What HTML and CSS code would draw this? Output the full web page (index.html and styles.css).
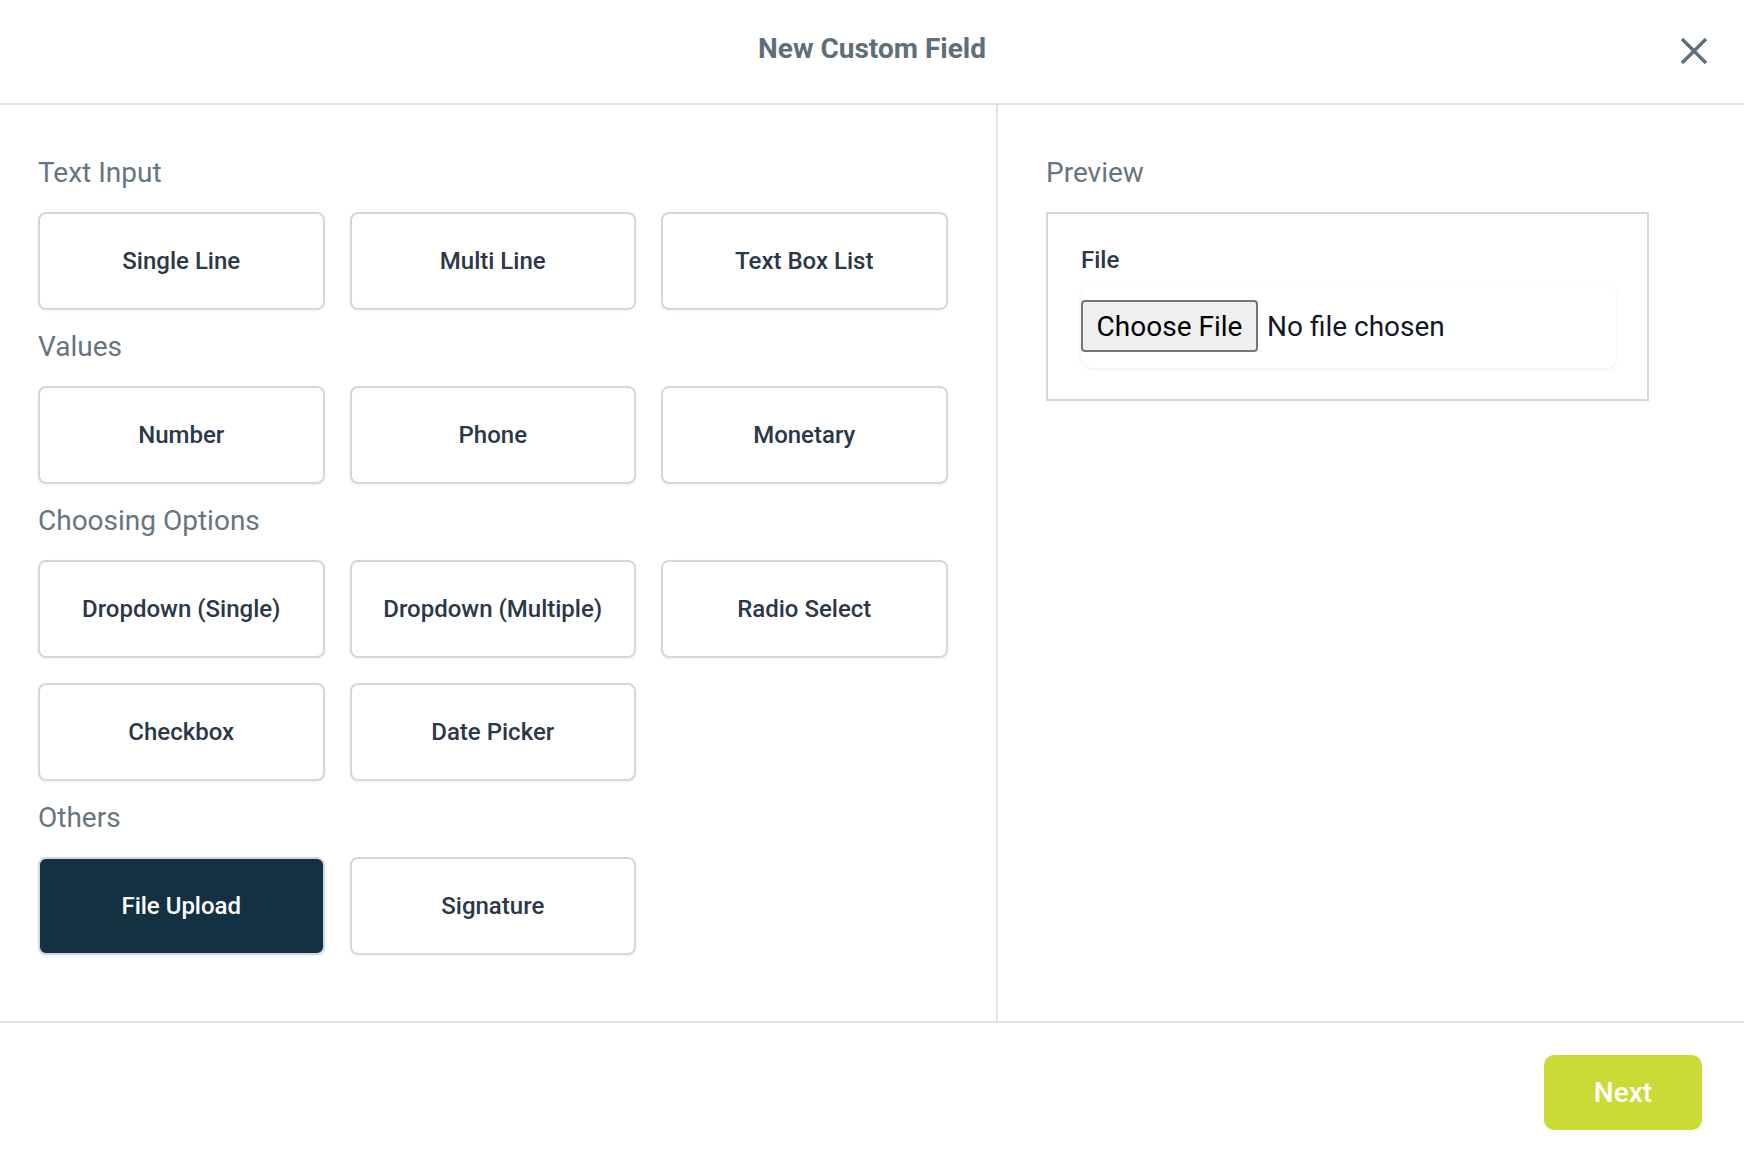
FILE: index.html
```html
<!DOCTYPE html>
<html lang="en">
<head>
<meta charset="utf-8">
<title>New Custom Field</title>
<link rel="stylesheet" href="styles.css">
</head>
<body>
<div class="modal">
  <header class="modal-header">
    <div class="spacer"></div>
    <h1 class="modal-title">New Custom Field</h1>
    <button class="close-btn" aria-label="Close">
      <svg width="28" height="28" viewBox="0 0 28 28"><path d="M2 2 L26 26 M26 2 L2 26" stroke="#5f6f79" stroke-width="3.4" fill="none"/></svg>
    </button>
  </header>
  <main class="modal-body">
    <section class="types">
      <div class="group">
        <h2 class="group-title">Text Input</h2>
        <div class="grid">
          <button class="type-btn">Single Line</button>
          <button class="type-btn">Multi Line</button>
          <button class="type-btn">Text Box List</button>
        </div>
      </div>
      <div class="group">
        <h2 class="group-title">Values</h2>
        <div class="grid">
          <button class="type-btn">Number</button>
          <button class="type-btn">Phone</button>
          <button class="type-btn">Monetary</button>
        </div>
      </div>
      <div class="group">
        <h2 class="group-title">Choosing Options</h2>
        <div class="grid">
          <button class="type-btn">Dropdown (Single)</button>
          <button class="type-btn">Dropdown (Multiple)</button>
          <button class="type-btn">Radio Select</button>
          <button class="type-btn">Checkbox</button>
          <button class="type-btn">Date Picker</button>
        </div>
      </div>
      <div class="group">
        <h2 class="group-title">Others</h2>
        <div class="grid">
          <button class="type-btn selected">File Upload</button>
          <button class="type-btn">Signature</button>
        </div>
      </div>
    </section>
    <section class="preview">
      <h2 class="group-title">Preview</h2>
      <div class="preview-box">
        <div class="field-label">File</div>
        <div class="file-picker">
          <span class="file-btn">Choose File</span>
          <span class="file-status">No file chosen</span>
        </div>
      </div>
    </section>
  </main>
  <footer class="modal-footer">
    <button class="next-btn">Next</button>
  </footer>
</div>
</body>
</html>
```

FILE: styles.css
```css
* { box-sizing: border-box; }

html, body {
  margin: 0;
  padding: 0;
  background: #ffffff;
}

body {
  font-family: Roboto, "Liberation Sans", Arial, sans-serif;
  width: 1744px;
  height: 1154px;
  overflow: hidden;
}

.modal {
  width: 1744px;
  height: 1154px;
  display: flex;
  flex-direction: column;
}

.modal-header {
  height: 105px;
  flex: none;
  border-bottom: 2px solid #dfe2e7;
  display: grid;
  grid-template-columns: 1fr auto 1fr;
  align-items: center;
}

.modal-title {
  margin: 0 0 6px 0;
  font-size: 28px;
  font-weight: 700;
  color: #5f6f79;
  line-height: 34px;
}

.close-btn {
  justify-self: end;
  margin-right: 36px;
  margin-bottom: 2px;
  width: 28px;
  height: 28px;
  padding: 0;
  border: 0;
  background: transparent;
  display: flex;
}

.modal-body {
  height: 918px;
  flex: none;
  display: flex;
  border-bottom: 2px solid #dfe2e7;
}

.types {
  width: 998px;
  border-right: 2px solid #dfe2e7;
  padding: 51px 0 0 38px;
  display: flex;
  flex-direction: column;
  gap: 20px;
}

.group-title {
  margin: 0 0 22px 0;
  font-size: 28px;
  font-weight: 400;
  line-height: 34px;
  color: #66757f;
}

.grid {
  display: grid;
  grid-template-columns: repeat(3, 286.5px);
  gap: 25px;
}

.type-btn {
  height: 98px;
  border: 2px solid #d3d7e1;
  border-radius: 8px;
  background: #ffffff;
  box-shadow: 0 1px 3px rgba(30, 40, 60, 0.06);
  font-family: Roboto, "Liberation Sans", Arial, sans-serif;
  font-size: 24px;
  font-weight: 500;
  color: #2b384a;
  padding: 0;
}

.type-btn.selected {
  background: #143043;
  color: #ffffff;
  border-color: #d3d7e1;
}

.preview {
  flex: 1;
  padding: 51px 0 0 48px;
}

.preview-box {
  width: 603px;
  border: 2px solid #d4d7e0;
  padding: 31px 31px 31px 33px;
}

.field-label {
  font-size: 24px;
  font-weight: 500;
  line-height: 30px;
  color: #2b384a;
  margin-bottom: 9px;
}

.file-picker {
  display: flex;
  align-items: center;
  gap: 9px;
  padding: 16px 0;
  background: #ffffff;
  border-radius: 12px;
  box-shadow: 0 1px 5px rgba(20, 30, 50, 0.07);
}

.file-btn {
  height: 52px;
  width: 177px;
  display: flex;
  align-items: center;
  justify-content: center;
  background: #efefef;
  border: 2px solid #767676;
  border-radius: 4px;
  font-size: 28px;
  color: #000000;
}

.file-status {
  font-size: 28px;
  color: #111827;
}

.modal-footer {
  flex: 1;
  display: flex;
  justify-content: flex-end;
  align-items: flex-start;
  padding: 32px 42px 0 0;
}

.next-btn {
  width: 158px;
  height: 75px;
  border: 0;
  border-radius: 10px;
  background: #cbdb36;
  color: #ffffff;
  font-family: Roboto, "Liberation Sans", Arial, sans-serif;
  font-size: 28px;
  font-weight: 500;
}
```
